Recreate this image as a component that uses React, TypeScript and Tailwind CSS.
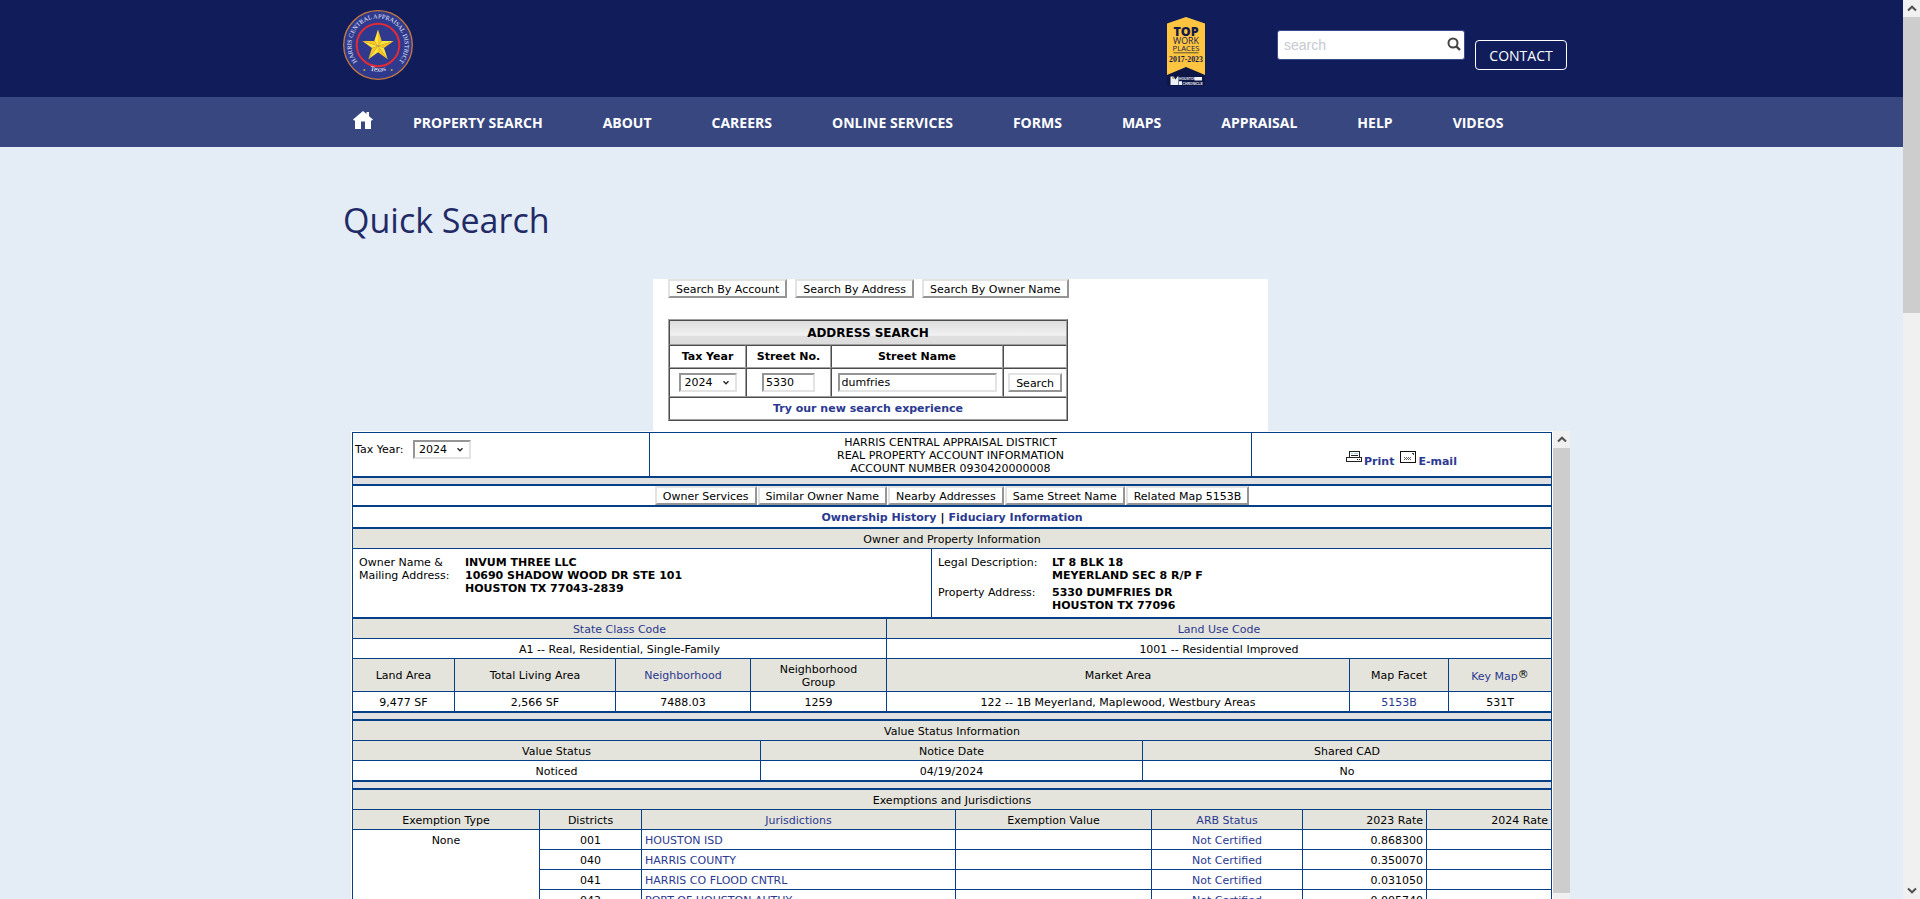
import React from "react";

const NAV = ["PROPERTY SEARCH", "ABOUT", "CAREERS", "ONLINE SERVICES", "FORMS", "MAPS", "APPRAISAL", "HELP", "VIDEOS"];

const DISTRICTS = [
  { id: "001", name: "HOUSTON ISD", rate: "0.868300" },
  { id: "040", name: "HARRIS COUNTY", rate: "0.350070" },
  { id: "041", name: "HARRIS CO FLOOD CNTRL", rate: "0.031050" },
  { id: "042", name: "PORT OF HOUSTON AUTHY", rate: "0.005740" },
];

const RAISED =
  "border-2 border-t-[#e3e3e3] border-l-[#e3e3e3] border-r-[#959595] border-b-[#959595] bg-white";
const SUNKEN =
  "border-2 border-t-[#959595] border-l-[#959595] border-r-[#e3e3e3] border-b-[#e3e3e3] bg-white";

function Seal() {
  const points = Array.from({ length: 10 }, (_, i) => {
    const r = i % 2 === 0 ? 16.5 : 6.3;
    const a = ((i * 36 - 90) * Math.PI) / 180;
    return [36 + r * Math.cos(a), 37 + r * Math.sin(a)];
  });
  return (
    <svg viewBox="0 0 72 72" className="h-[72px] w-[72px]" role="img" aria-label="Harris Central Appraisal District">
      <defs>
        <path id="ring" d="M18.500 56 A26.600 26.600 0 1 1 53.500 56" />
        <path id="ringLow" d="M20 58 A30 30 0 0 0 52 58" />
      </defs>
      <circle cx="36" cy="36" r="34.300" fill="#2f3a8f" stroke="#c9793c" strokeWidth="1.300" />
      <circle cx="36" cy="36" r="21.300" fill="#2f3a8f" stroke="#e32a35" strokeWidth="2" />
      {points.map((p, i) => {
        const q = points[(i + 1) % 10];
        return (
          <polygon key={i} points={`36,37 ${p[0]},${p[1]} ${q[0]},${q[1]}`} fill={i % 2 === 0 ? "#fdc51f" : "#ffe63b"} />
        );
      })}
      <text fill="#eef0fb" fontSize="6.300" className="font-['Liberation_Serif',serif]">
        <textPath href="#ring" startOffset="50%" textAnchor="middle">HARRIS CENTRAL APPRAISAL DISTRICT</textPath>
      </text>
      <text fill="#ffffff" fontSize="7" className="font-['Liberation_Serif',serif]">
        <textPath href="#ringLow" startOffset="50%" textAnchor="middle">Texas</textPath>
      </text>
      <circle cx="22.300" cy="61" r="1.100" fill="#b9a52c" />
      <circle cx="49.700" cy="61" r="1.100" fill="#b9a52c" />
    </svg>
  );
}

function Badge() {
  return (
    <svg viewBox="0 0 40 70" className="h-[70px] w-10" role="img" aria-label="Top Work Places 2017-2023">
      <rect x="1" y="48" width="38" height="21" fill="#0d1645" />
      <path d="M1 6.500 L20 0 L39 6.500 V58 L20 50 L1 58 Z" fill="#ffc540" />
      <g fill="#12194b" textAnchor="middle" className="font-['Open_Sans',sans-serif]">
        <text x="20" y="19.300" fontSize="12.500" fontWeight="800">TOP</text>
        <text x="20" y="27.300" fontSize="8.800">WORK</text>
        <text x="20" y="34" fontSize="7.700">PLACES</text>
      </g>
      <path d="M7.500 35.800 H32.500" stroke="#5c522f" strokeWidth="1" />
      <text x="20" y="45.300" fontSize="7.800" fontWeight="700" textAnchor="middle" fill="#12194b" className="font-['Liberation_Serif',serif]">2017-2023</text>
      <path d="M4.500 59.500 h3 l2 3 l2-3 h1 v8.500 h-8 z" fill="#eef0f8" />
      <circle cx="7" cy="61" r="1" fill="#c79a3a" />
      <rect x="28.500" y="60" width="7.500" height="3.500" fill="#eef0f8" />
      <rect x="13" y="64.200" width="3" height="3.800" fill="#eef0f8" />
      <g fill="#eef0f8" fontSize="3.400" fontWeight="700" className="font-['Liberation_Sans',sans-serif]">
        <text x="13" y="63.300">HOUSTON</text>
        <text x="16.500" y="67.700">CHRONICLE</text>
      </g>
    </svg>
  );
}

function Chevron({ up = false }: { up?: boolean }) {
  return (
    <span className="flex h-[17px] w-[17px] shrink-0 items-center justify-center bg-[#f0f0f0]">
      <svg viewBox="0 0 10 7" className="h-[7px] w-[10px]" aria-hidden="true">
        <path d={up ? "M1 5.500 L5 1.700 L9 5.500" : "M1 1.500 L5 5.300 L9 1.500"} fill="none" stroke="#505050" strokeWidth="2" />
      </svg>
    </span>
  );
}

function YearSelect({ id }: { id: string }) {
  return (
    <span className="relative inline-block align-middle">
      <select id={id} className={`block h-[19px] w-[58px] appearance-none pl-1 leading-[13px] ${SUNKEN}`}>
        <option>2024</option>
        <option>2023</option>
      </select>
      <svg viewBox="0 0 8 6" className="pointer-events-none absolute top-[7px] right-[7px] h-[6px] w-2" aria-hidden="true">
        <path d="M1.500 1.200 L4 3.800 L6.500 1.200" fill="none" stroke="#222" strokeWidth="1.300" />
      </svg>
    </span>
  );
}

function PushButton({ children }: { children: React.ReactNode }) {
  return <button className={`h-[19px] px-[6px] pt-px align-middle leading-[13px] whitespace-nowrap ${RAISED}`}>{children}</button>;
}

function Cell({
  children,
  head = false,
  thick = false,
  span,
  rows,
  className = "pt-px text-center align-middle",
}: {
  children?: React.ReactNode;
  head?: boolean;
  thick?: boolean;
  span?: number;
  rows?: number;
  className?: string;
}) {
  const Tag = head ? "th" : "td";
  return (
    <Tag
      colSpan={span}
      rowSpan={rows}
      className={`border-r border-[#053f86] font-normal ${thick ? "h-[21px] border-b-2" : "h-5 border-b"} ${head ? "bg-[#e4e4dc]" : "bg-white"} ${className}`}
    >
      {children}
    </Tag>
  );
}

function Grid({ cols, children }: { cols: number[]; children: React.ReactNode }) {
  const total = cols.reduce((a, b) => a + b, 0);
  return (
    <table className="w-full table-fixed border-separate border-spacing-0">
      <colgroup>
        {cols.map((c, i) => (
          <col key={i} style={{ width: `${(c / total) * 100}%` }} />
        ))}
      </colgroup>
      <tbody>{children}</tbody>
    </table>
  );
}

function Spacer() {
  return <div className="h-2 border-r border-b-2 border-[#053f86] bg-[#e0e0e0]" />;
}

function Link({ children }: { children: React.ReactNode }) {
  return <a href="#" className="text-[#2b3990]">{children}</a>;
}

function AddressSearch() {
  const cell = "border border-t-[#4c4c4c] border-l-[#4c4c4c] border-r-[#a0a0a0] border-b-[#a0a0a0] p-0";
  return (
    <section className="mx-auto h-[152px] w-full max-w-[615px] bg-white pl-[15px]">
      <div className="flex gap-2">
        <PushButton>Search By Account</PushButton>
        <PushButton>Search By Address</PushButton>
        <PushButton>Search By Owner Name</PushButton>
      </div>
      <table className="mt-[21px] w-[400px] table-fixed border-separate border-spacing-0 border border-t-[#a0a0a0] border-r-[#4c4c4c] border-b-[#4c4c4c] border-l-[#a0a0a0]">
        <colgroup>
          <col className="w-[77px]" />
          <col className="w-[85px]" />
          <col className="w-[172px]" />
          <col className="w-[64px]" />
        </colgroup>
        <tbody>
          <tr className="h-[25px]">
            <th colSpan={4} className={`${cell} bg-[linear-gradient(#dcdcdc,#f2f2f2_62%,#e0e0e0_66%,#dcdcdc)] text-xs`}>ADDRESS SEARCH</th>
          </tr>
          <tr className="h-[23px]">
            <th className={cell}><label htmlFor="year">Tax Year</label></th>
            <th className={cell}><label htmlFor="number">Street No.</label></th>
            <th className={cell}><label htmlFor="street">Street Name</label></th>
            <th className={cell} />
          </tr>
          <tr className="h-[29px] text-center">
            <td className={cell}><YearSelect id="year" /></td>
            <td className={cell}>
              <input id="number" defaultValue="5330" className={`h-[19px] w-[53px] px-0.5 align-middle ${SUNKEN}`} />
            </td>
            <td className={cell}>
              <input id="street" defaultValue="dumfries" className={`h-[19px] w-[159px] px-0.5 align-middle ${SUNKEN}`} />
            </td>
            <td className={cell}><PushButton>Search</PushButton></td>
          </tr>
          <tr className="h-[23px]">
            <th colSpan={4} className={cell}><Link>Try our new search experience</Link></th>
          </tr>
        </tbody>
      </table>
    </section>
  );
}

function Account() {
  return (
    <div className="flex bg-white">
      <div className="mt-px ml-px min-w-0 flex-1 border-t border-l border-[#053f86]">
        <Grid cols={[297, 602, 300]}>
          <tr className="h-[45px]">
            <Cell thick className="pt-[7px] pl-0.5 text-left align-top">
              <label htmlFor="taxyear" className="inline-block w-[58px]">Tax Year:</label>
              <YearSelect id="taxyear" />
            </Cell>
            <Cell thick>
              HARRIS CENTRAL APPRAISAL DISTRICT<br />REAL PROPERTY ACCOUNT INFORMATION<br />ACCOUNT NUMBER 0930420000008
            </Cell>
            <Cell thick>
              <span className="flex items-end justify-center gap-[6px] pt-2 font-bold">
                <a href="#" className="flex items-end gap-0.5 text-[#2b3990]">
                  <svg viewBox="0 0 16 12" className="mb-[5px] h-3 w-4" fill="none" stroke="#222" shapeRendering="crispEdges" aria-hidden="true">
                    <path d="M3.500 6 V0.500 H13.500 V6 M0.500 6.500 H15.500 V10.500 H0.500 Z" />
                    <path d="M5 2.500 H6.500 M7.500 2.500 H12" stroke="#9fd0ee" />
                    <path d="M5 4.500 H12 M11 8.500 H12 M13 8.500 H14" />
                  </svg>
                  Print
                </a>
                <a href="#" className="flex items-end gap-0.5 text-[#2b3990]">
                  <svg viewBox="0 0 16 12" className="mb-[5px] h-3 w-4" fill="none" stroke="#111" shapeRendering="crispEdges" aria-hidden="true">
                    <path d="M0.500 0.500 H15.500 V11.500 H0.500 Z" />
                    <path d="M12 2.500 H14 M13 3.500 H14" stroke="#44446e" />
                    <path d="M4 6.500 h1 m1 0 h1 m1 0 h1 m1 0 h1 M5 7.500 h1 m1 0 h1 m1 0 h1 M4 8.500 h1 m1 0 h1 m1 0 h1 m1 0 h1" stroke="#666" />
                  </svg>
                  E-mail
                </a>
              </span>
            </Cell>
          </tr>
        </Grid>
        <Spacer />
        <div className="flex h-[21px] justify-center gap-px border-r border-b-2 border-[#053f86]">
          <PushButton>Owner Services</PushButton>
          <PushButton>Similar Owner Name</PushButton>
          <PushButton>Nearby Addresses</PushButton>
          <PushButton>Same Street Name</PushButton>
          <PushButton>Related Map 5153B</PushButton>
        </div>
        <div className="flex h-[22px] items-center justify-center gap-1 border-r border-b-2 border-[#053f86] pt-px font-bold">
          <Link>Ownership History</Link>|<Link>Fiduciary Information</Link>
        </div>
        <Grid cols={[579, 620]}>
          <tr><Cell head span={2}>Owner and Property Information</Cell></tr>
          <tr className="h-[70px]">
            <Cell thick className="pt-[7px] pl-[6px] text-left align-top">
              <dl className="flex">
                <dt className="w-[106px]">Owner Name &amp;<br />Mailing Address:</dt>
                <dd className="font-bold">INVUM THREE LLC<br />10690 SHADOW WOOD DR STE 101<br />HOUSTON TX 77043-2839</dd>
              </dl>
            </Cell>
            <Cell thick className="pt-[7px] pl-[6px] text-left align-top">
              <dl className="grid grid-cols-[114px_1fr] gap-y-1">
                <dt>Legal Description:</dt>
                <dd className="font-bold">LT 8 BLK 18<br />MEYERLAND SEC 8 R/P F</dd>
                <dt>Property Address:</dt>
                <dd className="font-bold">5330 DUMFRIES DR<br />HOUSTON TX 77096</dd>
              </dl>
            </Cell>
          </tr>
        </Grid>
        <Grid cols={[102, 161, 135, 136, 463, 99, 103]}>
          <tr>
            <Cell head span={4}><Link>State Class Code</Link></Cell>
            <Cell head span={3}><Link>Land Use Code</Link></Cell>
          </tr>
          <tr>
            <Cell span={4}>A1 -- Real, Residential, Single-Family</Cell>
            <Cell span={3}>1001 -- Residential Improved</Cell>
          </tr>
          <tr className="h-[33px]">
            <Cell head>Land Area</Cell>
            <Cell head>Total Living Area</Cell>
            <Cell head><Link>Neighborhood</Link></Cell>
            <Cell head>Neighborhood<br />Group</Cell>
            <Cell head>Market Area</Cell>
            <Cell head>Map Facet</Cell>
            <Cell head><Link>Key Map</Link><span className="align-[2px] leading-none">®</span></Cell>
          </tr>
          <tr>
            <Cell thick>9,477 SF</Cell>
            <Cell thick>2,566 SF</Cell>
            <Cell thick>7488.03</Cell>
            <Cell thick>1259</Cell>
            <Cell thick>122 -- 1B Meyerland, Maplewood, Westbury Areas</Cell>
            <Cell thick><Link>5153B</Link></Cell>
            <Cell thick>531T</Cell>
          </tr>
        </Grid>
        <Spacer />
        <Grid cols={[408, 382, 409]}>
          <tr><Cell head span={3}>Value Status Information</Cell></tr>
          <tr><Cell head>Value Status</Cell><Cell head>Notice Date</Cell><Cell head>Shared CAD</Cell></tr>
          <tr><Cell thick>Noticed</Cell><Cell thick>04/19/2024</Cell><Cell thick>No</Cell></tr>
        </Grid>
        <Spacer />
        <Grid cols={[187, 102, 314, 196, 151, 124, 125]}>
          <tr><Cell head span={7}>Exemptions and Jurisdictions</Cell></tr>
          <tr>
            <Cell head>Exemption Type</Cell>
            <Cell head>Districts</Cell>
            <Cell head><Link>Jurisdictions</Link></Cell>
            <Cell head>Exemption Value</Cell>
            <Cell head><Link>ARB Status</Link></Cell>
            <Cell head className="pt-px pr-[3px] text-right">2023 Rate</Cell>
            <Cell head className="pt-px pr-[3px] text-right">2024 Rate</Cell>
          </tr>
          {DISTRICTS.map((d, i) => (
            <tr key={d.id}>
              {i === 0 && <Cell rows={DISTRICTS.length} className="pt-1 text-center align-top">None</Cell>}
              <Cell>{d.id}</Cell>
              <Cell className="pt-px pl-[3px] text-left"><Link>{d.name}</Link></Cell>
              <Cell />
              <Cell><Link>Not Certified</Link></Cell>
              <Cell className="pt-px pr-[3px] text-right">{d.rate}</Cell>
              <Cell />
            </tr>
          ))}
        </Grid>
      </div>
      <div className="ml-px flex flex-col bg-[#f0f0f0]" aria-hidden="true">
        <Chevron up />
        <div className="h-[445px] w-[17px] bg-[#cdcdcd]" />
      </div>
    </div>
  );
}

export default function App() {
  return (
    <div className="flex h-screen overflow-hidden bg-[#e4ecf5] font-['Open_Sans',sans-serif]">
      <div className="min-w-0 flex-1 overflow-hidden">
        <header className="bg-[#101d5a]">
          <div className="mx-auto flex h-[97px] max-w-[1231px] items-start pt-[9px] pl-[6px]">
            <Seal />
            <div className="mt-2 ml-auto"><Badge /></div>
            <form className="relative mt-[21px] ml-[71px]" role="search">
              <input
                aria-label="search"
                placeholder="search"
                className="block h-[30px] w-[188px] rounded-[3px] border border-[#3a4a8c] bg-white pr-7 pl-[6px] font-['Liberation_Sans',sans-serif] text-sm placeholder:text-[#c6c8d2]"
              />
              <button type="button" aria-label="Go" className="absolute top-[7px] right-1">
                <svg viewBox="0 0 14 14" className="h-[14px] w-[14px]" fill="none" stroke="#444" aria-hidden="true">
                  <circle cx="6" cy="6" r="4.500" strokeWidth="2" />
                  <path d="M9.300 9.300 L13 13" strokeWidth="2.400" />
                </svg>
              </button>
            </form>
            <a href="#" className="mt-[31px] ml-[10px] flex h-[30px] w-[92px] items-center justify-center rounded border border-white pt-0.5 text-sm text-white">CONTACT</a>
          </div>
        </header>
        <nav className="bg-[#38477f]">
          <div className="mx-auto flex h-[50px] max-w-[1231px] items-center gap-[60px] pt-0.5 pl-[17px] text-sm font-bold whitespace-nowrap text-white">
            <a href="#" aria-label="Home" className="-mr-5 pb-[7px]">
              <svg viewBox="0 0 20 18" className="h-[18px] w-5" fill="#fff" aria-hidden="true">
                <path d="M10 0 L13.500 3 V1 H16 V5.200 L20 8.600 L19 9.500 H18 V18 H12 V10.500 H8 V18 H2 V9.500 H1 L0 8.600 Z" />
              </svg>
            </a>
            {NAV.map((n) => <a key={n} href="#">{n}</a>)}
          </div>
        </nav>
        <main className="mx-auto max-w-[1237px] pl-[10px] text-[#1f2a66]">
          <h1 className="pt-[49px] pb-[35px] text-[34px] leading-12">Quick Search</h1>
          <div className="pl-2 font-['DejaVu_Sans',sans-serif] text-[11px] leading-[13px] text-black">
            <AddressSearch />
            <Account />
          </div>
        </main>
      </div>
      <div className="flex w-[17px] shrink-0 flex-col justify-between bg-[#f0f0f0]" aria-hidden="true">
        <div>
          <Chevron up />
          <div className="h-[296px] bg-[#cdcdcd]" />
        </div>
        <Chevron />
      </div>
    </div>
  );
}
